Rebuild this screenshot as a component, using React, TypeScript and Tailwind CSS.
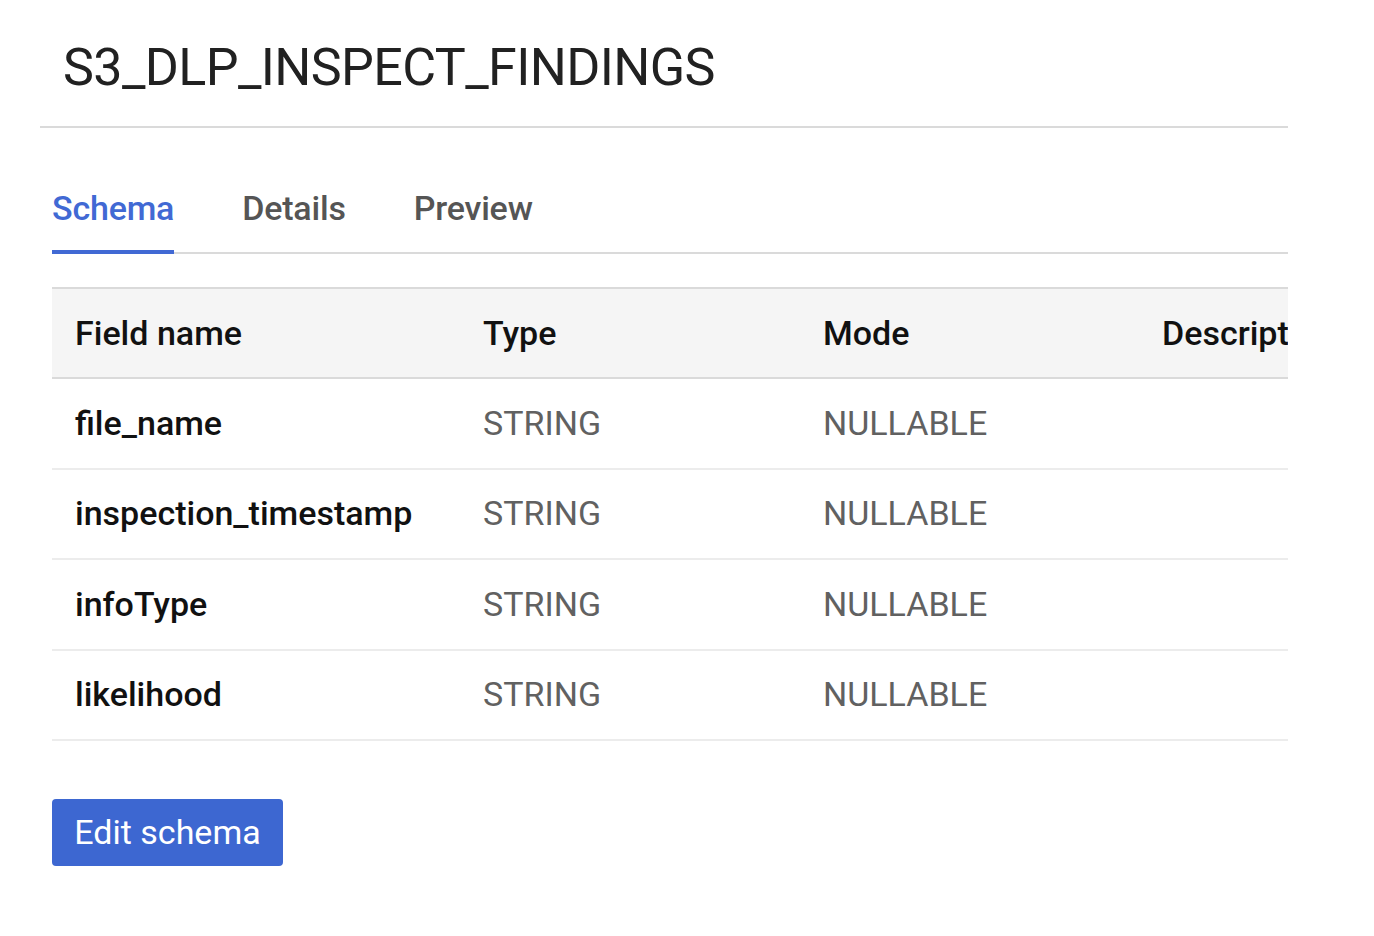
const rows = [
  { name: "file_name", type: "STRING", mode: "NULLABLE" },
  { name: "inspection_timestamp", type: "STRING", mode: "NULLABLE" },
  { name: "infoType", type: "STRING", mode: "NULLABLE" },
  { name: "likelihood", type: "STRING", mode: "NULLABLE" },
];

const tabs = ["Schema", "Details", "Preview"];

export default function App() {
  return (
    <div className="min-h-screen bg-white font-['Roboto',sans-serif]">
      <div className="w-[1288px] pl-[40px]">
        <h1 className="pl-[23px] pt-[38px] pb-[28px] text-[52px] leading-[60px] font-normal tracking-[-0.6px] text-[#212121]">
          S3_DLP_INSPECT_FINDINGS
        </h1>
        <div className="h-[2px] bg-[#dadada]" />

        <div className="pl-[12px]">
          {/* tabs */}
          <div className="mt-[60px] flex border-b-2 border-[#dadada]">
            {tabs.map((t, i) => (
              <div
                key={t}
                className={
                  i === 0
                    ? "mr-[68px] -mb-[2px] border-b-4 border-[#4169d4] pb-[22px] text-[34px] leading-[40px] font-medium tracking-[-0.2px] text-[#4169d4]"
                    : "mr-[68px] pb-[24px] text-[34px] leading-[40px] font-medium tracking-[-0.2px] text-[#555555]"
                }
              >
                {t}
              </div>
            ))}
          </div>

          {/* table */}
          <div className="mt-[33px] overflow-hidden">
            <table className="w-[1400px] table-fixed border-collapse text-left">
              <colgroup>
                <col className="w-[408px]" />
                <col className="w-[340px]" />
                <col className="w-[339px]" />
                <col />
              </colgroup>
              <thead>
                <tr className="h-[90px] border-y-2 border-[#dadada] bg-[#f5f5f5]">
                  {["Field name", "Type", "Mode", "Description"].map((h) => (
                    <th key={h} className="px-[23px] text-[34px] font-medium text-[#111111] whitespace-nowrap">
                      {h}
                    </th>
                  ))}
                </tr>
              </thead>
              <tbody>
                {rows.map((r) => (
                  <tr key={r.name} className="h-[90.5px] border-b-2 border-[#ececec]">
                    <td className="px-[23px] text-[34px] font-medium text-[#111111] whitespace-nowrap">{r.name}</td>
                    <td className="px-[23px] text-[34px] text-[#616161]">{r.type}</td>
                    <td className="px-[23px] text-[34px] text-[#616161]">{r.mode}</td>
                    <td />
                  </tr>
                ))}
              </tbody>
            </table>
          </div>

          <button className="mt-[58px] h-[67px] w-[231px] rounded-[4px] bg-[#3d67d1] text-[34px] text-white">
            Edit schema
          </button>
        </div>
      </div>
    </div>
  );
}
